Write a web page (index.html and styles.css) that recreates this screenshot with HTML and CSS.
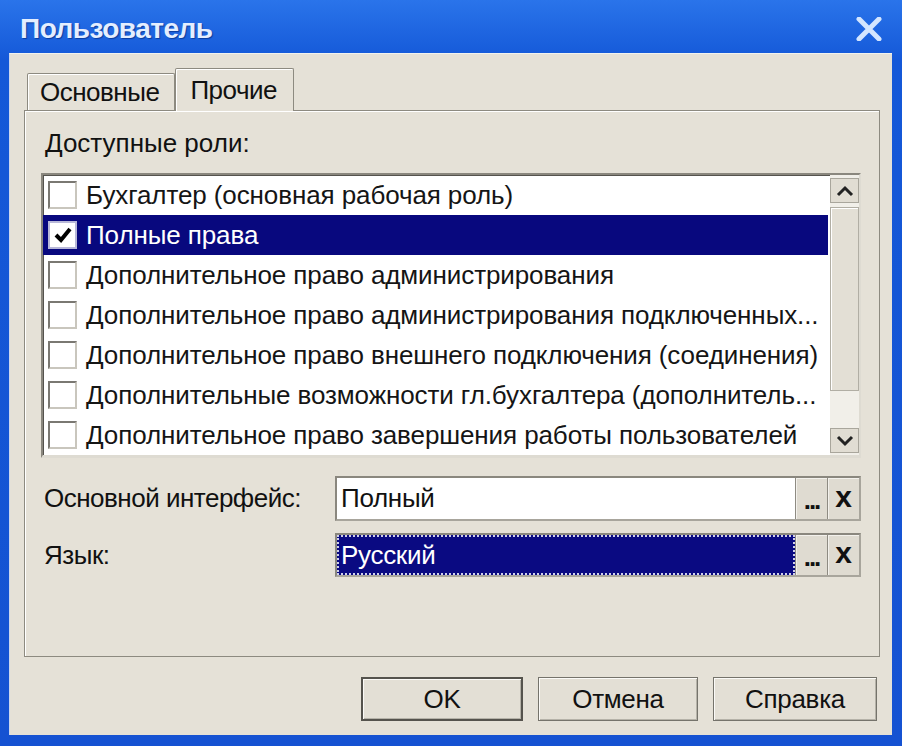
FILE: index.html
```html
<!DOCTYPE html>
<html lang="ru">
<head>
<meta charset="utf-8">
<title>Пользователь</title>
<link rel="stylesheet" href="styles.css">
</head>
<body>
<div class="window">
  <div class="titlebar">
    <span class="title">Пользователь</span>
    <svg class="close" width="26" height="24" viewBox="0 0 26 24"><path d="M3 2 L23 22 M23 2 L3 22" stroke="#d4e6ff" stroke-width="5" stroke-linecap="round"/></svg>
  </div>
  <div class="client">
    <div class="tabs">
      <div class="tab">Основные</div>
      <div class="tab active">Прочие</div>
    </div>
    <div class="panel">
      <div class="caption">Доступные роли:</div>
      <div class="listbox">
        <div class="rows">
          <div class="row"><span class="cb"></span><span class="rtext">Бухгалтер (основная рабочая роль)</span></div>
          <div class="row selected"><span class="cb"><svg width="22" height="22" viewBox="0 0 22 22"><path d="M4 11 L9 16 L18 5" fill="none" stroke="#000" stroke-width="4"/></svg></span><span class="rtext">Полные права</span></div>
          <div class="row"><span class="cb"></span><span class="rtext">Дополнительное право администрирования</span></div>
          <div class="row"><span class="cb"></span><span class="rtext">Дополнительное право администрирования подключенных...</span></div>
          <div class="row"><span class="cb"></span><span class="rtext">Дополнительное право внешнего подключения (соединения)</span></div>
          <div class="row"><span class="cb"></span><span class="rtext">Дополнительные возможности гл.бухгалтера (дополнитель...</span></div>
          <div class="row"><span class="cb"></span><span class="rtext">Дополнительное право завершения работы пользователей</span></div>
        </div>
        <div class="scrollbar">
          <div class="sbtn"><svg width="20" height="14" viewBox="0 0 20 14"><path d="M3 11 L10 4 L17 11" fill="none" stroke="#222" stroke-width="3"/></svg></div>
          <div class="thumb"></div>
          <div class="track"></div>
          <div class="sbtn"><svg width="20" height="14" viewBox="0 0 20 14"><path d="M3 3 L10 10 L17 3" fill="none" stroke="#222" stroke-width="3"/></svg></div>
        </div>
      </div>
      <div class="field first">
        <span class="flabel">Основной интерфейс:</span>
        <div class="fbox">
          <div class="finput">Полный</div>
          <div class="fbtn dots">...</div>
          <div class="fbtn clear">x</div>
        </div>
      </div>
      <div class="field">
        <span class="flabel">Язык:</span>
        <div class="fbox">
          <div class="finput focused"><span class="focustext">Русский</span></div>
          <div class="fbtn dots">...</div>
          <div class="fbtn clear">x</div>
        </div>
      </div>
    </div>
    <div class="buttons">
      <div class="btn default">OK</div>
      <div class="btn">Отмена</div>
      <div class="btn">Справка</div>
    </div>
  </div>
</div>
</body>
</html>
```

FILE: styles.css
```css
html, body {
  margin: 0;
  padding: 0;
  background: #1656d6;
}
body {
  width: 902px;
  height: 746px;
  overflow: hidden;
  font-family: "Liberation Sans", Arial, sans-serif;
}
.window {
  width: 902px;
  height: 746px;
  box-sizing: border-box;
  background: linear-gradient(#2a74ea, #1458d8 60px, #1552d2);
  padding: 0 10px 11px 9px;
  display: flex;
  flex-direction: column;
}
.titlebar {
  height: 53px;
  display: flex;
  align-items: center;
  justify-content: space-between;
  padding: 4px 10px 0 11px;
  box-sizing: border-box;
}
.title {
  color: #e4eeff;
  font-weight: bold;
  font-size: 28px;
  letter-spacing: -0.5px;
  text-shadow: 1px 1px 1px #0b3c9e;
}
.close {
  display: block;
}
.client {
  flex: 1;
  background: #e5e1d7;
  border-left: 1px solid #cbd6ee;
  border-top: 1px solid #f2f2ee;
  padding: 14px 12px 14px 14px;
  display: flex;
  flex-direction: column;
}
.tabs {
  display: flex;
  align-items: flex-end;
  height: 42px;
  padding-left: 3px;
  position: relative;
  z-index: 1;
}
.tab {
  font-size: 26px;
  letter-spacing: -0.5px;
  color: #111;
  height: 37px;
  box-sizing: border-box;
  padding: 0 15px 0 12px;
  line-height: 37px;
  border: 1px solid #8d8a80;
  border-bottom: none;
  border-radius: 2px 2px 0 0;
  box-shadow: inset 1px 1px 0 #fff;
  background: #e5e1d7;
}
.tab.active {
  height: 43px;
  line-height: 43px;
  margin-bottom: -1px;
  padding: 0 16px 0 14px;
}
.panel {
  height: 547px;
  box-sizing: border-box;
  border: 1px solid #8d8a80;
  box-shadow: inset 1px 1px 0 #fff;
  padding: 17px 18px 0 16px;
}
.caption {
  font-size: 26px;
  line-height: 30px;
  padding-left: 4px;
  color: #111;
  margin-bottom: 15px;
}
.listbox {
  height: 285px;
  box-sizing: border-box;
  border-top: 2px solid #8a877e;
  border-left: 2px solid #8a877e;
  border-right: 2px solid #dedbd2;
  border-bottom: 3px solid #dedbd2;
  box-shadow: inset 1px 1px 0 #55534e;
  background: #fff;
  display: flex;
}
.rows {
  flex: 1;
}
.row {
  height: 40px;
  display: flex;
  align-items: center;
  padding-left: 5px;
  margin-right: 2px;
}
.row.selected {
  background: #08087e;
  color: #fff;
}
.cb {
  width: 29px;
  height: 28px;
  box-sizing: border-box;
  border: 2px solid #7a7872;
  border-right-color: #c9c6bd;
  border-bottom-color: #c9c6bd;
  background: #fff;
  display: flex;
  align-items: center;
  justify-content: center;
  margin-right: 9px;
  flex-shrink: 0;
}
.row.selected .cb {
  border-color: #b8b8d8;
}
.rtext {
  font-size: 26px;
  letter-spacing: -0.1px;
  white-space: nowrap;
  color: #151515;
}
.row.selected .rtext {
  color: #fff;
}
.scrollbar {
  width: 29px;
  display: flex;
  flex-direction: column;
  padding: 3px 0 2px;
  box-sizing: border-box;
  background: #f1efe9;
}
.sbtn {
  height: 25px;
  box-sizing: border-box;
  background: #e1ddd3;
  border: 1px solid #a9a69c;
  display: flex;
  align-items: center;
  justify-content: center;
}
.thumb {
  height: 184px;
  margin-top: 4px;
  box-sizing: border-box;
  background: #e3dfd5;
  border: 1px solid #b1aea4;
  box-shadow: inset 1px 1px 0 #fff;
}
.track {
  flex: 1;
}
.field {
  display: flex;
  align-items: center;
  height: 44px;
  margin-top: 12px;
}
.field.first {
  height: 45px;
  margin-top: 18px;
}
.flabel {
  width: 291px;
  padding-left: 3px;
  font-size: 26px;
  letter-spacing: -0.5px;
  white-space: nowrap;
  color: #111;
}
.fbox {
  flex: 1;
  height: 100%;
  box-sizing: border-box;
  border-top: 2px solid #8a877e;
  border-left: 2px solid #8a877e;
  border-right: 2px solid #a8a59c;
  border-bottom: 2px solid #a8a59c;
  display: flex;
}
.finput {
  flex: 1;
  background: #fff;
  font-size: 26px;
  letter-spacing: -0.3px;
  color: #111;
  display: flex;
  align-items: center;
  padding-left: 4px;
}
.finput.focused {
  padding: 0;
}
.focustext {
  flex: 1;
  align-self: stretch;
  display: flex;
  align-items: center;
  background: #0a0a82;
  color: #fff;
  border: 2px dotted #d0d0ec;
  padding-left: 2px;
}
.fbtn {
  width: 32px;
  box-sizing: border-box;
  background: #dfdbd1;
  border-left: 1px solid #8e8b82;
  box-shadow: inset 1px 1px 0 #f3f1ec;
  display: flex;
  align-items: center;
  justify-content: center;
  color: #111;
}
.dots {
  font-size: 26px;
  font-weight: bold;
  padding-top: 4px;
  letter-spacing: -2px;
}
.clear {
  font-size: 30px;
  font-weight: bold;
  padding-bottom: 4px;
}
.buttons {
  display: flex;
  justify-content: flex-end;
  margin-top: 20px;
  padding-right: 3px;
  gap: 15px;
}
.btn {
  width: 160px;
  height: 44px;
  box-sizing: border-box;
  border: 1px solid #75736b;
  box-shadow: inset 1px 1px 0 #fbfaf7, inset -1px -1px 0 #b5b2a8;
  background: #e3dfd5;
  display: flex;
  align-items: center;
  justify-content: center;
  font-size: 26px;
  letter-spacing: -0.3px;
  color: #111;
}
.btn.default {
  width: 162px;
  border: 2px solid #55534d;
}
.btn:last-child {
  width: 164px;
}
```
